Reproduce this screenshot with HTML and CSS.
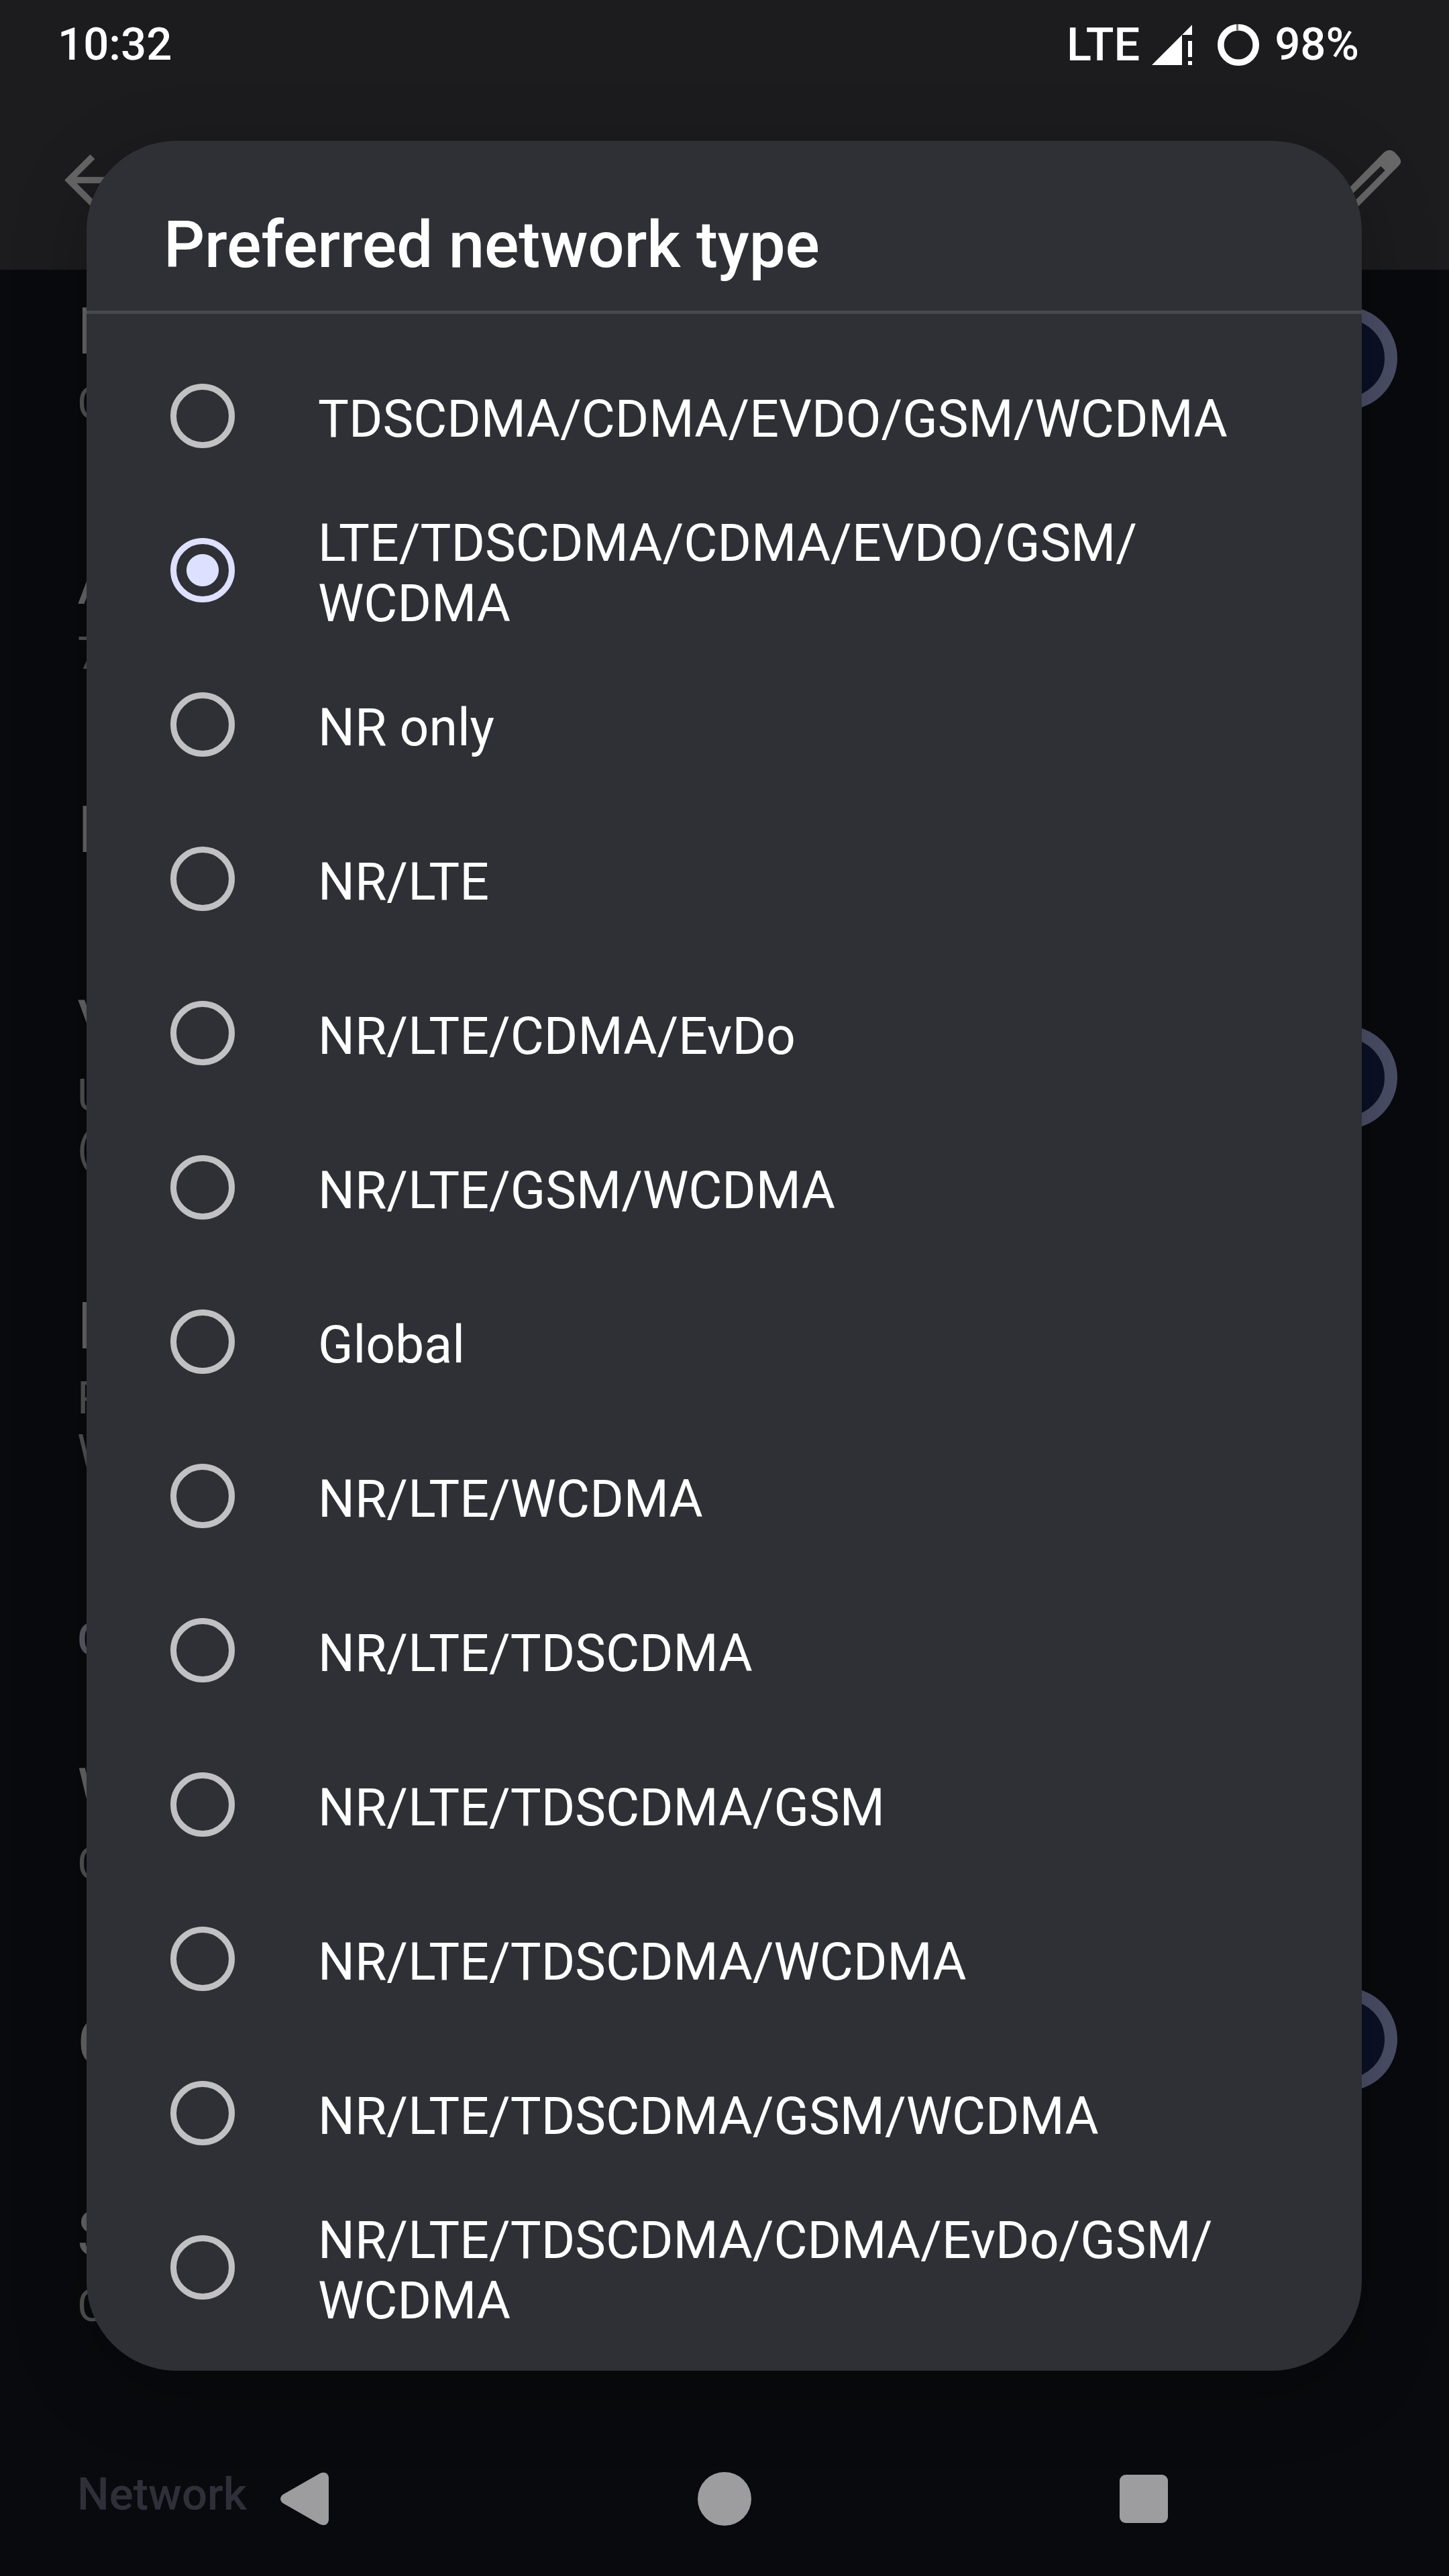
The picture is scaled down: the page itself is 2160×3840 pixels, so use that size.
FILE: index.html
```html
<!DOCTYPE html>
<html lang="en">
<head>
<meta charset="utf-8">
<title>Preferred network type</title>
<link rel="stylesheet" href="styles.css">
</head>
<body>
<div class="screen">
  <header class="top">
    <div class="status">
      <span class="clock">10:32</span>
      <div class="indicators">
        <span class="net">LTE</span>
        <svg class="signal" width="60" height="60" viewBox="0 0 60 60"><path fill="#fff" d="M0 60L45 15V60ZM45 15L60 0V15ZM54 24H60V48H54ZM54 54H60V60H54Z"/></svg>
        <svg class="battery" width="62" height="62" viewBox="0 0 62 62"><circle cx="31" cy="31" r="26.2" fill="none" stroke="#fff" stroke-width="9.6"/><path stroke="#777" stroke-width="3" d="M29.5 0V9.6"/></svg>
        <span class="percent">98%</span>
      </div>
    </div>
    <div class="appbar">
      <svg width="115" height="115" viewBox="0 0 24 24"><path fill="#666667" d="M20 11H7.83l5.59-5.59L12 4l-8 8 8 8 1.41-1.41L7.83 13H20z"/></svg>
      <svg width="115" height="115" viewBox="0 0 115 115"><path fill="#686869" fill-rule="evenodd" d="M0 83.5L66 16.3Q74.5 9.5 82 16L88 22.5Q94 29.5 89 35L28 96.5L0 97ZM10 87L15 96L67.7 43L61.3 36.7Z"/></svg>
    </div>
  </header>
  <main class="prefs">
    <section class="pref h373"><div class="row"><div><div class="t">M</div><div class="s">C</div></div><i class="switch"></i></div></section>
    <section class="pref h370"><div class="row"><div><div class="t">A</div><div class="s">7</div></div></div></section>
    <section class="pref h289"><div class="row"><div class="t">I</div></div></section>
    <section class="pref h451"><div class="row"><div><div class="t">V</div><div class="s">U<br>(</div></div><i class="switch"></i></div></section>
    <section class="pref h484"><div class="row"><div><div class="t">P</div><div class="s">P<br>W</div></div></div></section>
    <h2 class="cat h210">C</h2>
    <section class="pref h374"><div class="row"><div><div class="t">W</div><div class="s">C</div></div></div></section>
    <section class="pref h285"><div class="row single"><div class="t">C</div><i class="switch"></i></div></section>
    <section class="pref h404"><div class="row"><div><div class="t">S</div><div class="s">C</div></div></div></section>
    <h2 class="cat dim">Network</h2>
  </main>
  <div class="dialog">
    <h1 class="title">Preferred network type</h1>
    <ul class="options">
      <li><i class="radio"></i><span>TDSCDMA/CDMA/EVDO/GSM/WCDMA</span></li>
      <li><i class="radio on"></i><span>LTE/TDSCDMA/CDMA/EVDO/GSM/<br>WCDMA</span></li>
      <li><i class="radio"></i><span>NR only</span></li>
      <li><i class="radio"></i><span>NR/LTE</span></li>
      <li><i class="radio"></i><span>NR/LTE/CDMA/EvDo</span></li>
      <li><i class="radio"></i><span>NR/LTE/GSM/WCDMA</span></li>
      <li><i class="radio"></i><span>Global</span></li>
      <li><i class="radio"></i><span>NR/LTE/WCDMA</span></li>
      <li><i class="radio"></i><span>NR/LTE/TDSCDMA</span></li>
      <li><i class="radio"></i><span>NR/LTE/TDSCDMA/GSM</span></li>
      <li><i class="radio"></i><span>NR/LTE/TDSCDMA/WCDMA</span></li>
      <li><i class="radio"></i><span>NR/LTE/TDSCDMA/GSM/WCDMA</span></li>
      <li><i class="radio"></i><span>NR/LTE/TDSCDMA/CDMA/EvDo/GSM/<br>WCDMA</span></li>
    </ul>
  </div>
  <nav class="navbar">
    <svg width="80" height="80" viewBox="0 0 80 80"><path fill="#9d9d9f" d="M7 34L63 2Q74-2 76 8V72Q74 82 63 78L7 46Q1 40 7 34Z"/></svg>
    <svg width="80" height="80" viewBox="0 0 80 80"><circle cx="40" cy="40" r="40" fill="#9d9d9f"/></svg>
    <svg width="80" height="80" viewBox="0 0 80 80"><rect x="4" y="4" width="72" height="72" rx="9" fill="#9d9d9f"/></svg>
  </nav>
</div>
</body>
</html>
```
FILE: styles.css
```css
* { box-sizing: border-box; margin: 0; padding: 0; }
body { background: #090a0d; font-family: Roboto, sans-serif; color: #fff; }
.screen { position: relative; width: 2160px; height: 3840px; overflow: hidden; background: #090a0d; }

.top { height: 402px; background: #1c1c1e; }
.status { height: 132px; padding: 1px 134px 0 86px; display: flex; justify-content: space-between; align-items: center; font-size: 67.2px; line-height: 79px; font-weight: 500; }
.indicators { display: flex; align-items: center; }
.net { font-size: 68.5px; }
.signal { margin-left: 18px; }
.battery { margin: 0 23px 0 38px; }
.appbar { padding: 79px 48px 0 77px; display: flex; justify-content: space-between; }

.prefs { padding: 36px 77px 0 115px; }
.row { display: flex; align-items: center; justify-content: space-between; }
.row.single { height: 112px; }
.h373 { height: 373px; }
.h370 { height: 370px; }
.h289 { height: 289px; }
.h451 { height: 451px; }
.h484 { height: 484px; }
.h210 { height: 210px; }
.h374 { height: 374px; }
.h285 { height: 285px; }
.h404 { height: 404px; }
.t { font-size: 96px; line-height: 112px; color: #666667; }
.s { margin-top: 12px; font-size: 67.2px; line-height: 79px; color: #525253; }
.cat { font-size: 67.2px; line-height: 79px; font-weight: 500; color: #5b5b68; }
.dim { padding-top: 1px; color: #2f2f39; }
.switch { flex: none; width: 250px; height: 154px; margin-top: -11px; border: 19px solid #4b4f67; border-radius: 77px; background: #0b1126; }

.dialog { position: absolute; left: 129px; top: 210px; width: 1901px; height: 3324px; border-radius: 134px; background: #2f3035; box-shadow: 0 30px 110px rgba(0, 0, 0, .25); }
.title { height: 258px; padding: 99px 115px 0; border-bottom: 5px solid #48494d; font-size: 96px; line-height: 112px; font-weight: 500; letter-spacing: -.15px; }
.options { padding-top: 37px; list-style: none; }
.options li { height: 230px; padding-left: 124.6px; display: flex; align-items: center; gap: 124.4px; font-size: 77px; line-height: 90px; }
.options span { padding-top: 9px; white-space: nowrap; }
.radio { flex: none; width: 96px; height: 96px; border: 9.6px solid #c1c1c3; border-radius: 50%; }
.radio.on { border-color: #dee0ff; background: radial-gradient(circle, #dee0ff 23.5px, transparent 24.5px); }

.navbar { position: absolute; left: 414px; top: 3685px; width: 1331px; display: flex; justify-content: space-between; }
```
